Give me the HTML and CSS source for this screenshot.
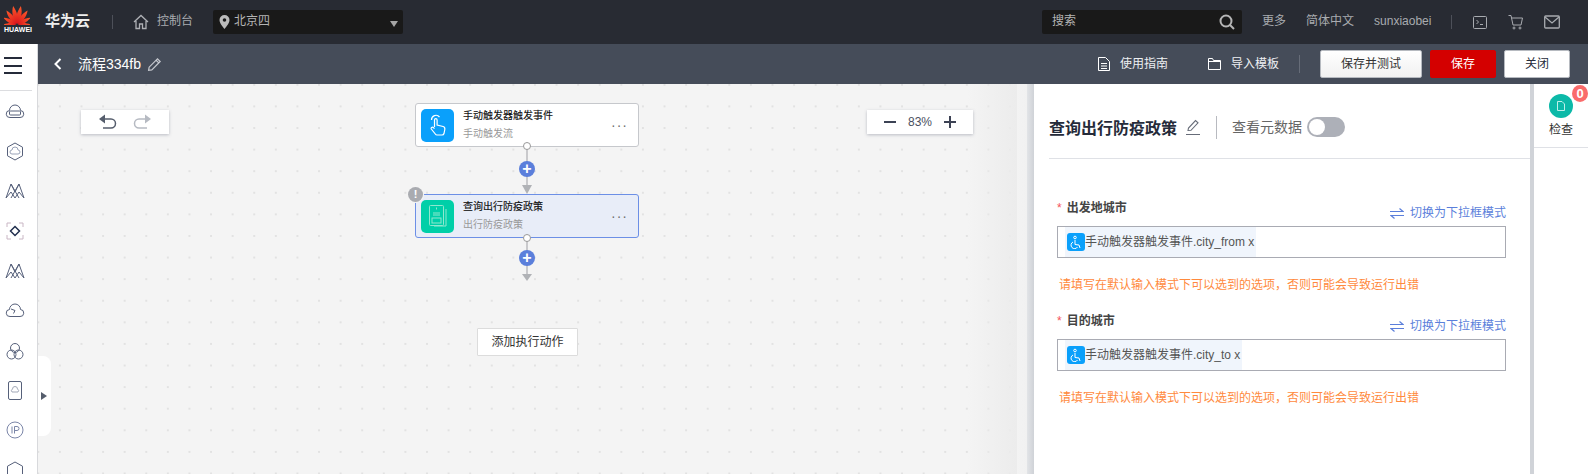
FILE: index.html
```html
<!DOCTYPE html>
<html lang="zh">
<head>
<meta charset="utf-8">
<title>流程334fb</title>
<link rel="stylesheet" href="styles.css">
</head>
<body>
<header class="topbar">
  <div class="logo">
    <svg width="26" height="20" viewBox="-13 -20 26 20">
      <defs><linearGradient id="petal" x1="0" y1="0" x2="0" y2="1"><stop offset="0" stop-color="#ff5a2a"/><stop offset="1" stop-color="#d8141c"/></linearGradient></defs>
      <g fill="url(#petal)">
      <path d="M0-1C-3-7-3.500-13-.5-19.500 2.500-13 3-7 0-1Z" transform="rotate(-10)"/>
      <path d="M0-1C-3-7-3.500-13-.5-19.500 2.500-13 3-7 0-1Z" transform="scale(-1 1) rotate(-10)"/>
      <path d="M0-1C-3-6-3.500-12-1-18 2-12 3-6 0-1Z" transform="rotate(-33)"/>
      <path d="M0-1C-3-6-3.500-12-1-18 2-12 3-6 0-1Z" transform="scale(-1 1) rotate(-33)"/>
      <path d="M0-1C-2.800-5-3-10-1-15.500 2-10 2.800-5 0-1Z" transform="rotate(-58)"/>
      <path d="M0-1C-2.800-5-3-10-1-15.500 2-10 2.800-5 0-1Z" transform="scale(-1 1) rotate(-58)"/>
      <path d="M0-1C-2.400-5-2.600-9-1-13.500 1.500-9 2.400-5 0-1Z" transform="rotate(-84)"/>
      <path d="M0-1C-2.400-5-2.600-9-1-13.500 1.500-9 2.400-5 0-1Z" transform="scale(-1 1) rotate(-84)"/>
    </g></svg>
    <span class="logo-text">HUAWEI</span>
  </div>
  <span class="brand">华为云</span>
  <span class="vsep sep-brand"></span>
  <svg class="home" width="16" height="16" viewBox="0 0 16 16" fill="none" stroke="#aeb0b5" stroke-width="1.3"><path d="M1 8 8 1.500 15 8M3 7v7.500h3.500V10h3v4.500H13V7"/></svg>
  <span class="top-link console">控制台</span>
  <div class="region">
    <svg width="11" height="14" viewBox="0 0 11 14"><path fill="#bbb" fill-rule="evenodd" d="M5.500 0a5 5 0 0 1 5 5c0 3.500-5 9-5 9s-5-5.500-5-9a5 5 0 0 1 5-5Zm0 3.200a1.800 1.800 0 1 0 0 3.600 1.800 1.800 0 0 0 0-3.600Z"/></svg>
    <span class="region-name">北京四</span>
    <span class="caret"></span>
  </div>
  <div class="search">
    <span class="search-text">搜索</span>
    <svg width="16" height="16" viewBox="0 0 16 16" fill="none" stroke="#b5b5b5" stroke-width="2"><circle cx="7" cy="7" r="5.500"/><path d="m11 11 4 4"/></svg>
  </div>
  <span class="top-link more">更多</span>
  <span class="top-link lang">简体中文</span>
  <span class="top-link user">sunxiaobei</span>
  <span class="vsep sep-user"></span>
  <svg class="ticon term" width="14" height="13" viewBox="0 0 14 13" fill="none" stroke="#a8abb0"><rect x=".5" y=".5" width="13" height="12" rx="1"/><path d="m3.500 4 2 2-2 2M7 8.500h3"/></svg>
  <svg class="ticon cart" width="16" height="15" viewBox="0 0 16 15" fill="none" stroke="#a8abb0"><path d="M.5 .5h2.500l2 9.500h8l1.500-7H3.500"/><circle cx="6" cy="13" r="1"/><circle cx="12" cy="13" r="1"/></svg>
  <svg class="ticon mail" width="16" height="14" viewBox="0 0 16 14" fill="none" stroke="#a8abb0" stroke-width="1.300"><rect x=".7" y="1" width="14.600" height="12" rx="1"/><path d="m1 2 7 6 7-6"/></svg>
</header>

<div class="layout">
  <aside class="sidebar">
    <div class="burger"><i></i><i></i><i></i></div>
    <div class="side-icons">
      <svg width="20" height="16" viewBox="0 0 20 16" fill="none" stroke="#56607a"><path d="M5 13.500a3.500 3.500 0 0 1-.5-7 5.500 5.500 0 0 1 11 0 3.500 3.500 0 0 1-.5 7Z"/><rect x="4.500" y="7" width="11" height="4" rx="1"/></svg>
      <svg width="18" height="19" viewBox="0 0 18 19" fill="none" stroke="#56607a"><path d="M9 1 16.500 5.200v8.600L9 18 1.500 13.800V5.200Z"/><path stroke="#9aa3b8" d="M6 12a2 2 0 0 1 0-4 3 3 0 0 1 6 0 2 2 0 0 1 0 4Z"/></svg>
      <svg width="20" height="16" viewBox="0 0 20 16" fill="none" stroke="#56607a"><path d="M1 15 6 1l4 8 4-8 5 14M1 15l5-6 4 6 4-6 5 6M6 1l8 14M14 1 6 15"/></svg>
      <svg width="18" height="18" viewBox="0 0 18 18" fill="none"><path stroke="#c9b6c4" d="M1 5V1h4M13 1h4v4M17 13v4h-4M5 17H1v-4"/><path stroke="#22304f" stroke-width="1.500" d="m9 4.500 4.500 4.500L9 13.500 4.500 9Z"/></svg>
      <svg width="20" height="16" viewBox="0 0 20 16" fill="none" stroke="#56607a"><path d="M1 15 6 1l4 8 4-8 5 14M1 15l5-6 4 6 4-6 5 6M6 1l8 14M14 1 6 15"/></svg>
      <svg width="20" height="15" viewBox="0 0 20 15" fill="none" stroke="#56607a"><path d="M5 13.500a3.500 3.500 0 0 1-.5-7 5.500 5.500 0 0 1 11 0 3.500 3.500 0 0 1-.5 7Z"/><path d="m6 6 4 1.500-1.500 3"/></svg>
      <svg width="18" height="18" viewBox="0 0 18 18" fill="none" stroke="#56607a"><circle cx="9" cy="6" r="4.500"/><circle cx="5.500" cy="12.500" r="4.500"/><circle cx="12.500" cy="12.500" r="4.500"/></svg>
      <svg width="14" height="19" viewBox="0 0 14 19" fill="none" stroke="#56607a"><rect x=".5" y=".5" width="13" height="18" rx="1.500"/><path stroke="#a3a9b8" d="M4 11a2 2 0 0 1 .5-3 2.500 2.500 0 0 1 5 0 2 2 0 0 1 .5 3Z"/></svg>
      <svg width="18" height="18" viewBox="0 0 18 18" fill="none" stroke="#7b86a8"><circle cx="9" cy="9" r="8"/><path d="M6 5.500v7M8.500 12.500v-7h2.500a2 2 0 0 1 0 4H8.500"/></svg>
      <svg width="18" height="18" viewBox="0 0 18 18" fill="none" stroke="#56607a"><path d="M9 1 16.500 5.200v8.600L9 18 1.500 13.800V5.200Z"/></svg>
    </div>
  </aside>

  <div class="work">
    <div class="subbar">
      <svg class="back" width="8" height="12" viewBox="0 0 8 12" fill="none" stroke="#fff" stroke-width="2"><path d="M6.500 1 1.500 6l5 5"/></svg>
      <span class="flow-name">流程334fb</span>
      <svg class="pen" width="15" height="15" viewBox="0 0 14 14" fill="none" stroke="#c7cad0" stroke-width="1.100"><path d="M1.500 12.500 2 9.500 9.800 1.700l2.500 2.500-7.800 7.800ZM8.500 3l2.500 2.500"/></svg>
      <svg class="sub-icon guide" width="12" height="14" viewBox="0 0 12 14" fill="none" stroke="#fff"><path d="M.5.500h7l4 4v9H.5ZM3 6.500h6M3 9h6M3 11.500h6"/></svg>
      <span class="sub-link">使用指南</span>
      <svg class="sub-icon folder" width="13" height="12" viewBox="0 0 13 12" fill="none" stroke="#fff"><path d="M.5 11.500V.5h4l1 2h7v9ZM.5 3.500h12"/></svg>
      <span class="sub-link">导入模板</span>
      <span class="vsep sep-sub"></span>
      <button class="btn btn-test">保存并测试</button>
      <button class="btn btn-save">保存</button>
      <button class="btn btn-close">关闭</button>
    </div>

    <div class="body-row">
      <main class="canvas">
        <div class="tool tool-undo">
          <svg width="18" height="16" viewBox="0 0 18 16" fill="none" stroke="#555d6c" stroke-width="1.500"><path d="M4 5h8a4.500 4.500 0 0 1 0 9H4"/><path fill="#555d6c" stroke="none" d="M6 .5v9L0 5Z"/></svg>
          <svg width="18" height="16" viewBox="0 0 18 16" fill="none" stroke="#b6bac2" stroke-width="1.500"><path d="M14 5H6a4.500 4.500 0 0 0 0 9h8"/><path fill="#b6bac2" stroke="none" d="M12 .5v9L18 5Z"/></svg>
        </div>
        <div class="tool tool-zoom">
          <span class="zoom-minus"></span>
          <span class="zoom-val">83%</span>
          <span class="zoom-plus"></span>
        </div>

        <div class="line line-a"></div>
        <div class="line line-b"></div>

        <div class="node node-first">
          <span class="node-icon icon-blue">
            <svg width="20" height="24" viewBox="0 0 20 24" fill="none" stroke="#fff" stroke-width="1.200"><path d="M3.500 7a4.500 4.500 0 0 1 8-3M6.500 14V7a1.300 1.300 0 0 1 2.600 0v5l6 1.500c1.500.5 2 1.500 1.700 3l-.8 4a2 2 0 0 1-2 1.500H9a2 2 0 0 1-1.700-1l-4-5c-.8-1.300 1-2.500 2-1.500l1.200 1.200"/></svg>
          </span>
          <div class="node-text"><b>手动触发器触发事件</b><span>手动触发流</span></div>
          <span class="dots">···</span>
        </div>
        <i class="port port-a"></i>
        <span class="plus plus-a">+</span>
        <i class="arrow arrow-a"></i>

        <div class="node node-active">
          <span class="node-icon icon-green">
            <svg width="20" height="24" viewBox="0 0 20 24" fill="none" stroke="#8fe8cf"><rect x="1.500" y="1.500" width="14" height="20" rx="1"/><path d="M18 5v17H6M5 9h7M5 11h7"/><rect x="4" y="14" width="9" height="5"/><path d="M8.500 3.500v2"/></svg>
          </span>
          <div class="node-text"><b>查询出行防疫政策</b><span>出行防疫政策</span></div>
          <span class="dots">···</span>
        </div>
        <span class="warn">!</span>
        <i class="port port-b"></i>
        <span class="plus plus-b">+</span>
        <i class="arrow arrow-b"></i>

        <button class="add-action">添加执行动作</button>
        <div class="side-tab"><i></i></div>
      </main>

      <section class="panel">
        <div class="panel-head">
          <h2>查询出行防疫政策</h2>
          <svg class="panel-pen" width="16" height="17" viewBox="0 0 16 17" fill="none" stroke="#666c78" stroke-width="1.100"><path d="M3 11.500 3.500 9 10.500 1.500l2.500 2.300-7 7.500ZM1 15.500h14"/></svg>
          <span class="head-sep"></span>
          <span class="meta">查看元数据</span>
          <span class="toggle"><i></i></span>
        </div>
        <div class="fields">
          <div class="field">
            <div class="field-top">
              <label><em>*</em>出发地城市</label>
              <a class="switch"><svg width="14" height="11" viewBox="0 0 14 11" fill="none" stroke="#5b7fdb" stroke-width="1.200"><path d="M0 3.500h13L9.500 .5M14 7.500H1l3.500 3"/></svg>切换为下拉框模式</a>
            </div>
            <div class="input">
              <span class="chip">
                <span class="chip-icon"><svg width="12" height="14" viewBox="0 0 12 14" fill="none" stroke="#fff"><circle cx="5" cy="2.500" r="1.300"/><path d="M5 5v4.500l4 .5 1 3M3 7a3.500 3.500 0 1 0 4.500 5"/></svg></span>手动触发器触发事件.city_from x
              </span>
            </div>
            <p class="hint">请填写在默认输入模式下可以选到的选项，否则可能会导致运行出错</p>
          </div>
          <div class="field">
            <div class="field-top">
              <label><em>*</em>目的城市</label>
              <a class="switch"><svg width="14" height="11" viewBox="0 0 14 11" fill="none" stroke="#5b7fdb" stroke-width="1.200"><path d="M0 3.500h13L9.500 .5M14 7.500H1l3.500 3"/></svg>切换为下拉框模式</a>
            </div>
            <div class="input">
              <span class="chip">
                <span class="chip-icon"><svg width="12" height="14" viewBox="0 0 12 14" fill="none" stroke="#fff"><circle cx="5" cy="2.500" r="1.300"/><path d="M5 5v4.500l4 .5 1 3M3 7a3.500 3.500 0 1 0 4.500 5"/></svg></span>手动触发器触发事件.city_to x
              </span>
            </div>
            <p class="hint">请填写在默认输入模式下可以选到的选项，否则可能会导致运行出错</p>
          </div>
        </div>
      </section>

      <aside class="rail">
        <div class="rail-item">
          <span class="rail-icon">
            <svg width="8" height="10" viewBox="0 0 8 10" fill="none" stroke="#bff0ea"><path d="M.5.500h4.500l2.500 2.500v6.500h-7Z"/></svg>
            <span class="badge">0</span>
          </span>
          <span class="rail-label">检查</span>
        </div>
      </aside>
    </div>
  </div>
</div>
</body>
</html>
```
FILE: styles.css
```css
* { box-sizing: border-box; }
html, body { margin: 0; height: 474px; overflow: hidden; }
body { font: 12px/1.2 "Liberation Sans", "Noto Sans CJK SC", sans-serif; color: #333; background: #fff; }

.topbar { height: 44px; background: #282b33; display: flex; align-items: center; color: #b4b6ba; }
.logo { width: 45px; height: 44px; padding: 5px 0 0 4px; display: flex; flex-direction: column; align-items: flex-start; }
.logo svg { display: block; flex: none; }
.logo-text { font-size: 7px; font-weight: 700; color: #fff; line-height: 8px; margin-top: 1px; width: 26px; text-align: center; }
.brand { font-size: 15px; font-weight: 700; color: #eee; width: 67px; padding-bottom: 2px; }
.vsep { width: 1px; background: #4d5059; height: 14px; flex: none; }
.home { margin-left: 20px; }
.top-link { flex: none; color: #a9abb0; padding-bottom: 2px; }
.console { margin-left: 8px; }
.region { margin-left: 20px; width: 190px; height: 24px; background: #191919; border-radius: 2px; display: flex; align-items: center; padding-left: 6px; }
.region-name { margin-left: 4px; color: #b4b4b4; padding-bottom: 2px; }
.caret { margin-left: auto; margin-right: 5px; margin-top: 3px; border: 4px solid transparent; border-top: 6px solid #a5a5a5; border-bottom: 0; }
.search { margin-left: 639px; width: 200px; height: 24px; background: #191919; border-radius: 2px; display: flex; align-items: center; justify-content: space-between; padding: 0 7px 0 10px; color: #b4b4b4; }
.search-text { padding-bottom: 2px; }
.more { margin-left: 20px; }
.lang { margin-left: 20px; }
.user { margin-left: 20px; }
.sep-user { margin-left: 20px; }
.ticon { flex: none; }
.term { margin-left: 21px; }
.cart { margin-left: 21px; }
.mail { margin-left: 20px; }

.layout { display: flex; height: 430px; }
.sidebar { width: 38px; flex: none; background: #fff; border-right: 1px solid #d8d9dc; overflow: hidden; }
.burger { height: 47px; width: 32px; padding: 13px 0 0 4px; border-bottom: 1px solid #dcdde0; }
.burger i { display: block; width: 18px; height: 2px; background: #252b3a; margin-bottom: 5.500px; }
.side-icons { display: grid; grid-auto-rows: 39.800px; justify-items: center; align-items: center; width: 30px; padding-top: 1px; }
.side-icons svg { display: block; }

.work { flex: 1; min-width: 0; display: flex; flex-direction: column; }
.subbar { height: 40px; flex: none; background: #454c59; display: flex; align-items: center; color: #fff; padding-left: 16px; }
.back { flex: none; }
.flow-name { font-size: 14px; margin-left: 16px; color: #fff; }
.pen { margin-left: 6px; }
.sub-icon { flex: none; }
.guide { margin-left: 936px; }
.folder { margin-left: 40px; }
.sub-link { margin-left: 10px; color: #eef0f3; padding-top: 1px; }
.sep-sub { margin-left: 20px; height: 18px; background: #666c78; }
.btn { font: inherit; height: 28px; padding: 0; border-radius: 2px; border: 1px solid #b6bac0; background: linear-gradient(#fff, #f1f1f1); color: #333; flex: none; }
.btn-test { margin-left: 20px; width: 102px; }
.btn-save { margin-left: 8px; width: 66px; background: #d40000; border-color: #d40000; color: #fff; }
.btn-close { margin-left: 8px; width: 66px; background: #fff; color: #252b3a; }

.body-row { flex: 1; display: flex; min-height: 0; }
.canvas { position: relative; width: 989px; flex: none; overflow: hidden; background-color: #f4f4f4;
  background-image: radial-gradient(circle at center, #e2e2e2 1px, transparent 1.300px);
  background-size: 21.600px 21.600px; background-position: -10.500px -10px; }
.canvas::after { content: ""; position: absolute; top: 0; right: 0; bottom: 0; width: 60px; background: linear-gradient(90deg, rgba(244,244,244,0), #ececec 83%, #f3f3f3 83%, #f1f1f1); }
.tool { position: absolute; top: 26px; height: 24px; background: #fff; box-shadow: 0 1px 3px rgba(80,85,110,.35); display: flex; align-items: center; }
.tool-undo { left: 43px; width: 88px; justify-content: center; gap: 16px; }
.tool-zoom { left: 829px; width: 106px; justify-content: center; z-index: 2; }
.zoom-minus { width: 12px; height: 2px; background: #3c4254; }
.zoom-val { margin: 0 12px; font-size: 12px; color: #4a5060; }
.zoom-plus { width: 12px; height: 12px; background: linear-gradient(#3c4254, #3c4254) center/12px 2px no-repeat, linear-gradient(#3c4254, #3c4254) center/2px 12px no-repeat; }

.node { position: absolute; left: 377px; width: 224px; display: flex; align-items: center; border-radius: 3px; padding-left: 5px; }
.node-first { top: 19px; height: 44px; background: #fff; border: 1px solid #c6c8cc; }
.node-active { top: 110px; height: 44px; background: #e8edf8; border: 1px solid #6c8fe6; }
.node-icon { width: 33px; height: 33px; border-radius: 5px; display: flex; align-items: center; justify-content: center; flex: none; }
.icon-blue { background: #0aa0fb; }
.icon-green { background: #00cfa8; }
.node-text { margin-left: 9px; display: flex; flex-direction: column; gap: 6px; font-size: 10px; line-height: 12px; flex: 1; }
.node-text b { color: #111; font-weight: 400; -webkit-text-stroke: .15px #111; }
.node-text span { color: #999; }
.dots { color: #707070; font-size: 14px; letter-spacing: 1px; margin-right: 10px; line-height: 12px; font-weight: 400; }
.line { position: absolute; left: 488px; width: 2px; background: #c9c9cc; }
.line-a { top: 62px; height: 42px; }
.line-b { top: 154px; height: 38px; }
.port { position: absolute; left: 485px; width: 8px; height: 8px; border-radius: 50%; background: #fff; border: 1px solid #999; }
.port-a { top: 58px; }
.port-b { top: 150px; }
.plus { position: absolute; left: 481px; width: 16px; height: 16px; border-radius: 50%; background: #5b7fdb; color: #fff; font-size: 16px; line-height: 15px; font-weight: 700; text-align: center; }
.plus-a { top: 77px; }
.plus-b { top: 166px; }
.arrow { position: absolute; left: 484px; border: 5px solid transparent; border-bottom: 0; border-top: 9px solid #b0b2b6; }
.arrow-a { top: 101px; }
.arrow-b { top: 190px; border-top-width: 7px; }
.warn { position: absolute; left: 370px; top: 103px; width: 15px; height: 15px; border-radius: 50%; background: #a9abb0; color: #fff; font-size: 11px; line-height: 14px; font-weight: 700; text-align: center; box-shadow: 0 0 0 1px #f4f4f4; }
.add-action { position: absolute; left: 439px; top: 244px; width: 101px; height: 28px; border: 1px solid #dcdcdc; background: #fff; font: inherit; color: #333; padding: 0; border-radius: 1px; }
.side-tab { position: absolute; left: 0; top: 272px; width: 13px; height: 80px; background: #fff; border-radius: 0 8px 8px 0; display: flex; align-items: center; padding-left: 3px; }
.side-tab i { border: 4px solid transparent; border-left: 6px solid #555d6c; border-right: 0; margin-left: 0; }

.panel { width: 507px; flex: none; padding-left: 7px; background: linear-gradient(90deg, #e2e4e7, #cfd2d7) left / 7px 100% no-repeat, #fff; border-right: 4px solid #d0d3d8; }
.panel-head { height: 75px; margin-left: 15px; border-bottom: 1px solid #dfe1e6; display: flex; align-items: center; padding-top: 12px; }
.panel-head h2 { font-size: 16px; font-weight: 700; color: #252b3a; margin: 0; line-height: 20px; padding-top: 3px; }
.panel-pen { margin-left: 8px; }
.head-sep { width: 1px; height: 23px; background: #b8bac0; margin-left: 15px; }
.meta { font-size: 14px; color: #666; margin-left: 15px; padding-top: 1px; }
.toggle { width: 38px; height: 20px; border-radius: 10px; background: #adb0b8; margin-left: 5px; padding: 2px; display: block; }
.toggle i { display: block; width: 16px; height: 16px; border-radius: 50%; background: #fff; }
.fields { padding: 40px 24px 0 23px; }
.field-top { height: 27px; display: flex; justify-content: space-between; position: relative; }
.field-top label { font-weight: 700; color: #444; line-height: 18px; }
.field-top em { color: #f5525a; font-style: normal; font-weight: 400; margin-right: 5px; }
.switch { color: #5b7fdb; line-height: 16px; margin-top: 6px; height: 16px; display: flex; align-items: center; gap: 6px; }
.input { height: 32px; border: 1px solid #a9abb3; padding: 0 7px; display: flex; align-items: stretch; background: #fff; }
.chip { background: #f0f5fc; display: flex; align-items: center; padding-left: 2px; padding-right: 2px; color: #555; white-space: nowrap; }
.chip-icon { width: 18px; height: 18px; border-radius: 3px; background: #0aa0fb; display: flex; align-items: center; justify-content: center; flex: none; }
.hint { margin: 0; padding: 19px 0 0 2px; color: #ff8a3d; line-height: 16px; height: 54px; }

.rail { flex: 1; background: #fff; }
.rail-item { height: 64px; border-bottom: 1px solid #dfe1e6; display: flex; flex-direction: column; align-items: center; padding-top: 10px; gap: 4px; }
.rail-icon { position: relative; flex: none; width: 24px; height: 24px; border-radius: 50%; background: #0cb9a8; display: flex; align-items: center; justify-content: center; }
.badge { position: absolute; left: 23px; top: -9px; width: 16px; height: 17px; border-radius: 50%; background: #fa6b6b; color: #fff; font-size: 13px; line-height: 17px; font-weight: 700; text-align: center; }
.rail-label { color: #333; font-size: 12px; line-height: 16px; }
```
